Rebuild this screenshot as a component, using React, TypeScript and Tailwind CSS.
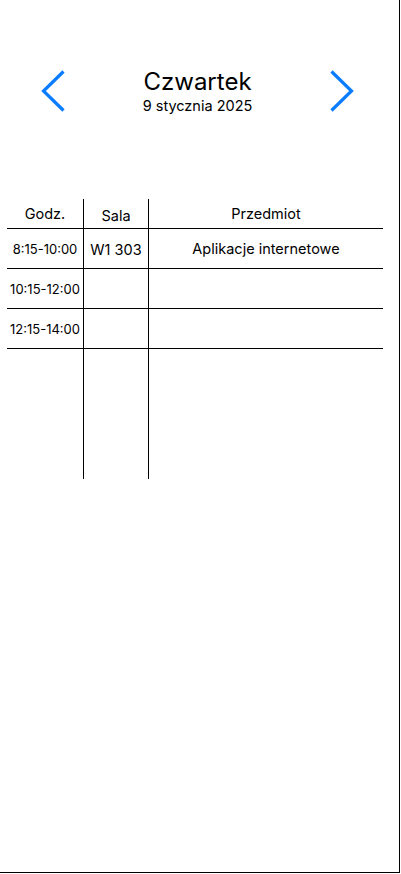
import React from 'react';

const Chevron: React.FC<{ dir: 'left' | 'right' }> = ({ dir }) => (
  <svg width="24" height="42" viewBox="0 0 24 42" fill="none" className="shrink-0">
    <polyline
      points={dir === 'left' ? '22.5,1.5 2.5,21 22.5,40.5' : '1.5,1.5 21.5,21 1.5,40.5'}
      stroke="#0a7cff"
      strokeWidth="3.2"
      strokeLinecap="butt"
      strokeLinejoin="miter"
    />
  </svg>
);

const rows = [
  { time: '8:15-10:00', room: 'W1 303', subject: 'Aplikacje internetowe' },
  { time: '10:15-12:00', room: '', subject: '' },
  { time: '12:15-14:00', room: '', subject: '' },
];

export default function App() {
  return (
    <div
      className="w-[400px] h-[873px] bg-white border-r border-b border-black text-black"
      style={{ fontFamily: 'Inter, "Noto Sans", sans-serif' }}
    >
      {/* Day header */}
      <div className="flex items-start pt-[70px] pl-[41px] pr-[45px]">
        <Chevron dir="left" />
        <div className="flex-1 flex flex-col items-center">
          <div className="text-[24px] leading-[29px] -mt-[3px]">Czwartek</div>
          <div className="text-[14.5px] leading-[18px] mt-[1px]">9 stycznia 2025</div>
        </div>
        <Chevron dir="right" />
      </div>

      {/* Timetable */}
      <div className="ml-[7px] w-[376px] mt-[84px] text-[14.5px]">
        <div className="flex h-[30px] border-b border-black">
          <div className="w-[76px] flex items-center justify-center pt-[1px]">Godz.</div>
          <div className="w-[65px] border-l border-black flex items-center justify-center pt-[4px]">Sala</div>
          <div className="flex-1 border-l border-black flex items-center justify-center">Przedmiot</div>
        </div>
        {rows.map((r) => (
          <div key={r.time} className="flex h-[40px] border-b border-black">
            <div className="w-[76px] flex items-center justify-center pt-[2px] text-[13px]">{r.time}</div>
            <div className="w-[65px] border-l border-black flex items-center justify-center pt-[2px]">{r.room}</div>
            <div className="flex-1 border-l border-black flex items-center justify-center pt-[1px]">{r.subject}</div>
          </div>
        ))}
        <div className="flex h-[130px]">
          <div className="w-[76px]" />
          <div className="w-[65px] border-l border-black" />
          <div className="flex-1 border-l border-black" />
        </div>
      </div>
    </div>
  );
}
